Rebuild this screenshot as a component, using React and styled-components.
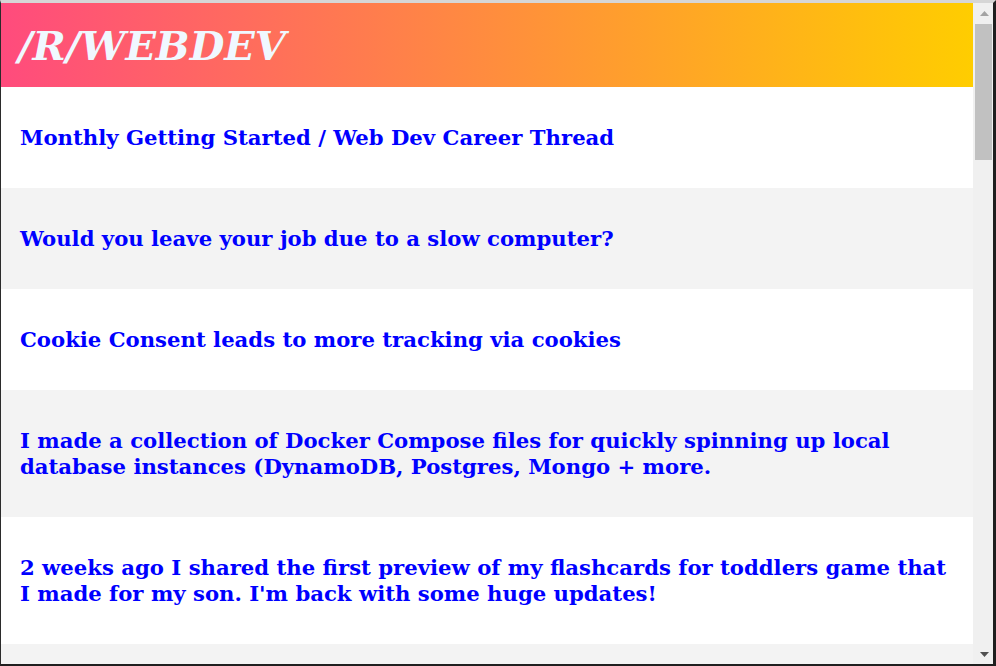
import React from "react";
import styled, { createGlobalStyle } from "styled-components";

const GlobalStyle = createGlobalStyle`
  html, body {
    margin: 0;
    padding: 0;
    background: #ffffff;
    overflow: hidden;
  }
`;

const Window = styled.div`
  box-sizing: border-box;
  width: 996px;
  height: 666px;
  display: flex;
  border-top: 3px solid #d6d6d6;
  border-left: 1px solid #2b2b2b;
  border-right: 3px solid #1f1f1f;
  border-bottom: 2px solid #1f1f1f;
  overflow: hidden;
`;

const Page = styled.div`
  flex: 1;
  min-width: 0;
  overflow: hidden;
  background: #f3f3f3;
  font-family: "DejaVu Serif", Georgia, serif;
`;

const Header = styled.header`
  height: 84px;
  display: flex;
  align-items: center;
  padding: 0 17px;
  background: linear-gradient(to right, #ff4b7d, #ffcd00);
`;

const Title = styled.h1`
  margin: 0;
  font-size: 40px;
  font-weight: bold;
  font-style: italic;
  color: #f0f8ff;
`;

const Post = styled.div`
  padding: 37.5px 20px 37.5px 19px;
  background: ${(p) => (p.$odd ? "#f3f3f3" : "#ffffff")};
`;

const PostLink = styled.a`
  display: block;
  font-size: 21.2px;
  line-height: 26px;
  font-weight: bold;
  color: #0000ff;
  text-decoration: none;
`;

const Scrollbar = styled.div`
  width: 20px;
  flex-shrink: 0;
  background: #f0f0f0;
  display: flex;
  flex-direction: column;
`;

const Arrow = styled.div`
  height: ${(p) => p.$h}px;
  display: flex;
  align-items: center;
  justify-content: center;
  padding-left: 2px;
`;

const Thumb = styled.div`
  width: 17px;
  height: 136px;
  margin-left: 2px;
  background: #c1c1c1;
`;

const Track = styled.div`
  flex: 1;
`;

const posts = [
  "Monthly Getting Started / Web Dev Career Thread",
  "Would you leave your job due to a slow computer?",
  "Cookie Consent leads to more tracking via cookies",
  "I made a collection of Docker Compose files for quickly spinning up local database instances (DynamoDB, Postgres, Mongo + more.",
  "2 weeks ago I shared the first preview of my flashcards for toddlers game that I made for my son. I'm back with some huge updates!",
];

export default function App() {
  return (
    <>
      <GlobalStyle />
      <Window>
        <Page>
          <Header>
            <Title>/R/WEBDEV</Title>
          </Header>
          {posts.map((title, i) => (
            <Post key={i} $odd={i % 2 === 1}>
              <PostLink href="#">{title}</PostLink>
            </Post>
          ))}
        </Page>
        <Scrollbar>
          <Arrow $h={21}>
            <svg width="9" height="5" viewBox="0 0 9 5">
              <path d="M0 5 L4.5 0 L9 5 Z" fill="#a3a3a3" />
            </svg>
          </Arrow>
          <Thumb />
          <Track />
          <Arrow $h={20}>
            <svg width="9" height="5" viewBox="0 0 9 5">
              <path d="M0 0 L4.5 5 L9 0 Z" fill="#505050" />
            </svg>
          </Arrow>
        </Scrollbar>
      </Window>
    </>
  );
}
